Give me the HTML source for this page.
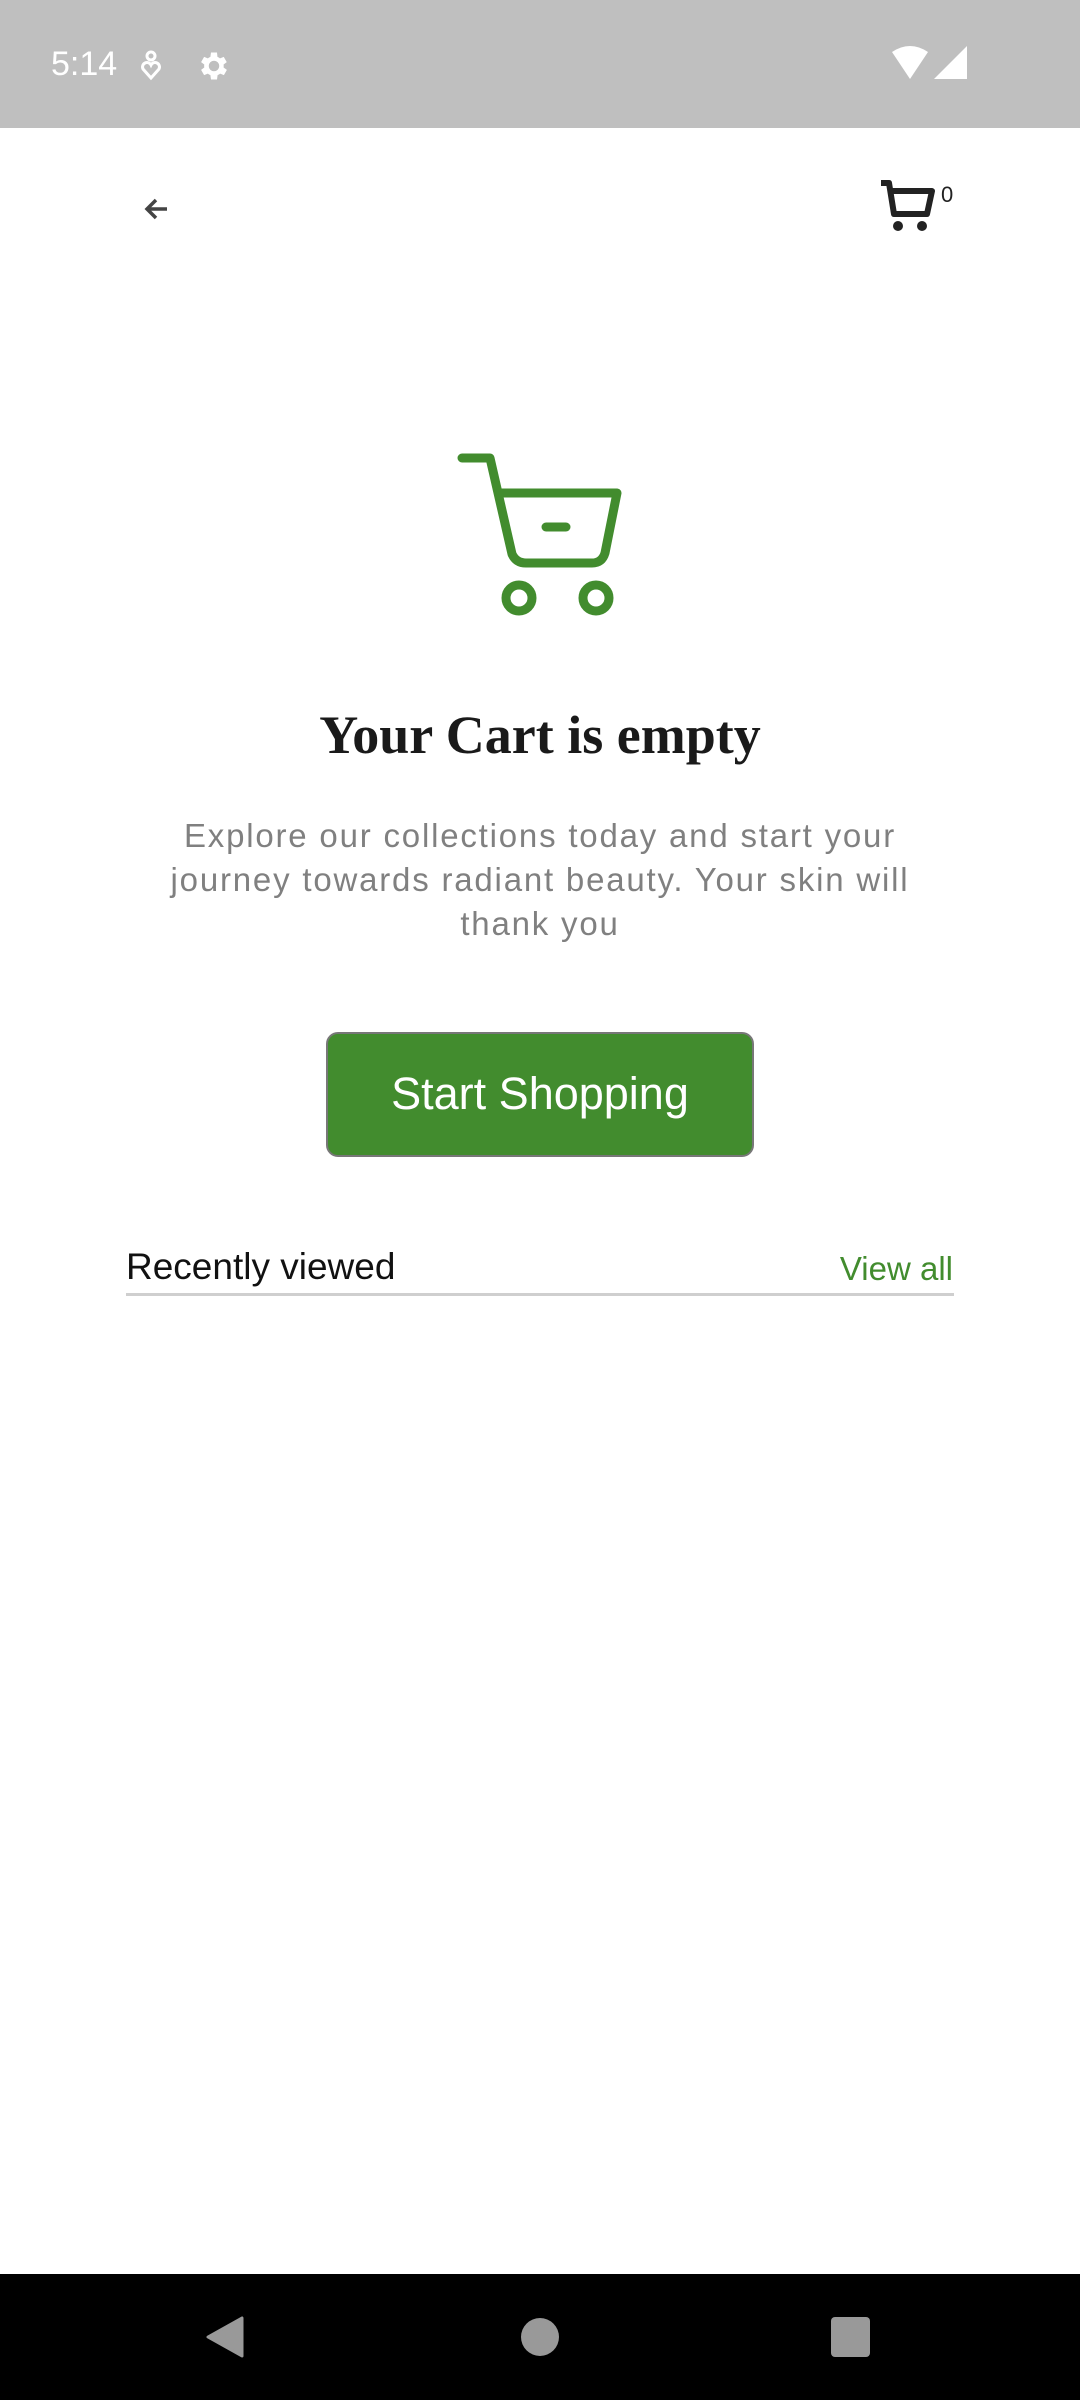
<!DOCTYPE html>
<html><head><meta charset="utf-8"><style>
*{margin:0;padding:0;box-sizing:border-box}
body{width:1080px;height:2400px;background:#fff;position:relative;overflow:hidden;font-family:"Liberation Sans",sans-serif}
.abs{position:absolute}
</style></head><body>
<div class="abs" style="left:0;top:0;width:1080px;height:128px;background:#bfbfbf"></div>
<div class="abs" style="left:51px;top:44px;font-size:34px;color:#fff;line-height:40px">5:14</div>
<svg class="abs" style="left:140px;top:50px" width="22" height="32" viewBox="0 0 22 32"><circle cx="11" cy="6" r="4" fill="none" stroke="#fff" stroke-width="3"/><path d="M11 28 L3 19 A4 4 0 0 1 11 15 A4 4 0 0 1 19 19 Z" fill="none" stroke="#fff" stroke-width="3"/></svg>
<svg class="abs" style="left:196px;top:48px" width="36" height="36" viewBox="0 0 24 24"><path fill="#fff" d="M19.4 13a7.5 7.5 0 000-2l2.1-1.6-2-3.5-2.5 1a7 7 0 00-1.7-1L15 3h-4l-.4 2.9a7 7 0 00-1.7 1l-2.5-1-2 3.5L6.5 11a7.5 7.5 0 000 2l-2.1 1.6 2 3.5 2.5-1a7 7 0 001.7 1L11 21h4l.4-2.9a7 7 0 001.7-1l2.5 1 2-3.5zM13 15.5A3.5 3.5 0 1113 8.5a3.5 3.5 0 010 7z" transform="translate(-1 0)"/></svg>
<svg class="abs" style="left:890px;top:46px" width="40" height="34" viewBox="0 0 40 34"><path d="M2 6 Q20 -6 38 6 L20 33 Z" fill="#fff"/></svg>
<svg class="abs" style="left:934px;top:46px" width="34" height="34" viewBox="0 0 34 34"><path d="M33 0 V33 H0 Z" fill="#fff"/></svg>

<svg class="abs" style="left:143px;top:196px" width="28" height="26" viewBox="0 0 28 26"><path d="M24 13 H5 M13 4 L4 13 L13 22" fill="none" stroke="#444" stroke-width="3.5"/></svg>
<svg class="abs" style="left:878px;top:178px" width="58" height="56" viewBox="0 0 58 56"><path d="M3 5 H11 L16 36 H49 L54 13 H13" fill="none" stroke="#222" stroke-width="6" stroke-linejoin="round"/><circle cx="20" cy="48" r="5" fill="#222"/><circle cx="44" cy="48" r="5" fill="#222"/></svg>
<div class="abs" style="left:941px;top:182px;font-size:22px;color:#222">0</div>

<svg class="abs" style="left:400px;top:420px" width="280" height="220" viewBox="0 0 280 220"><g fill="none" stroke="#428c2e" stroke-width="9" stroke-linecap="round" stroke-linejoin="round"><path d="M62 38 H90 L112 134 Q116 143 126 143 H192 Q202 143 205 133 L217 73 H100"/><path d="M146 107 H166"/><circle cx="119" cy="178" r="13"/><circle cx="196" cy="178" r="13"/></g></svg>

<div class="abs" style="left:0;top:704px;width:1080px;text-align:center;font-family:'Liberation Serif',serif;font-weight:bold;font-size:54px;color:#1a1a1a;line-height:62px">Your Cart is empty</div>
<div class="abs" style="left:150px;top:814px;width:780px;text-align:center;font-size:33px;color:#808080;line-height:44px;letter-spacing:1.8px">Explore our collections today and start your journey towards radiant beauty. Your skin will thank you</div>

<div class="abs" style="left:326px;top:1032px;width:428px;height:125px;background:#428c2e;border:2.5px solid #777;border-radius:12px;color:#fff;font-size:45px;text-align:center;line-height:120px">Start Shopping</div>

<div class="abs" style="left:126px;top:1246px;font-size:37px;color:#111;line-height:42px">Recently viewed</div>
<div class="abs" style="right:127px;top:1250px;font-size:33px;color:#428c2e;line-height:38px">View all</div>
<div class="abs" style="left:126px;top:1293px;width:828px;height:3px;background:#cfcfcf"></div>

<div class="abs" style="left:0;top:2274px;width:1080px;height:126px;background:#000"></div>
<svg class="abs" style="left:205px;top:2315px" width="40" height="44" viewBox="0 0 40 44"><path d="M37 3 V41 L3 22 Z" fill="#999" stroke="#999" stroke-width="3" stroke-linejoin="round"/></svg>
<div class="abs" style="left:521px;top:2318px;width:38px;height:38px;border-radius:50%;background:#999"></div>
<div class="abs" style="left:831px;top:2317px;width:39px;height:40px;border-radius:4px;background:#999"></div>
</body></html>
